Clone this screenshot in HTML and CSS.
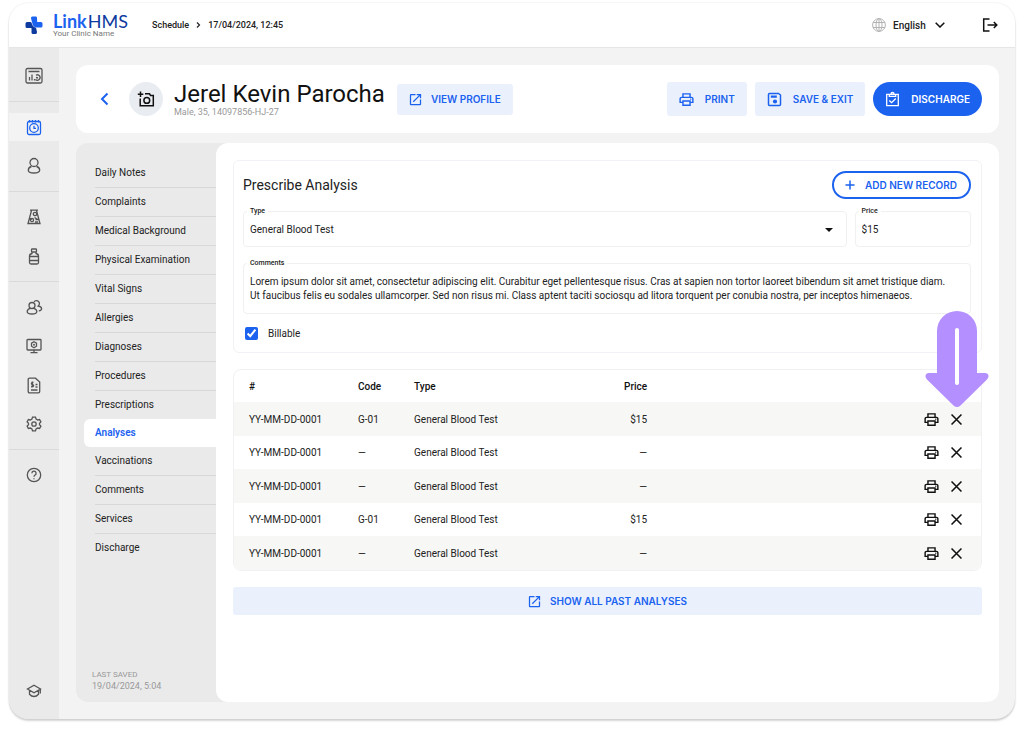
FILE: index.html
```html
<!DOCTYPE html>
<html lang="en">

<head>
    <meta charset="UTF-8">
    <meta name="viewport" content="width=device-width, initial-scale=1.0">
    <title>Link HMS - Analyses</title>
    <link rel="stylesheet" href="styles.css">
</head>

<body>
    <!-- shared icons -->
    <svg class="sprite" width="0" height="0" aria-hidden="true">
        <symbol id="i-print" viewBox="0 0 24 24">
            <path fill="currentColor" d="M19 8h-1V3H6v5H5c-1.66 0-3 1.34-3 3v6h4v4h12v-4h4v-6c0-1.66-1.34-3-3-3zM8 5h8v3H8V5zm8 14H8v-4h8v4zm2-4v-2H6v2H4v-4c0-.55.45-1 1-1h14c.55 0 1 .45 1 1v4h-2z" />
            <circle cx="18" cy="11.5" r="1" fill="currentColor" />
        </symbol>
        <symbol id="i-close" viewBox="0 0 24 24">
            <path fill="none" stroke="currentColor" stroke-width="2.2" d="M5 5l14 14M19 5L5 19" />
        </symbol>
        <symbol id="i-open" viewBox="0 0 24 24">
            <path fill="currentColor" d="M19 19H5V5h7V3H5c-1.1 0-2 .9-2 2v14c0 1.1.9 2 2 2h14c1.1 0 2-.9 2-2v-7h-2v7zM14 3v2h3.59l-9.83 9.83 1.41 1.41L19 6.41V10h2V3h-7z" />
        </symbol>
    </svg>

    <div class="app">
        <header class="topbar">
            <a href="#" class="logo">
                <svg width="18" height="18" viewBox="0 0 18 18" aria-hidden="true">
                    <path fill="#1b62ef" d="M7.500.5h3.200Q12 .5 12 1.800L12.200 6H16q1.500 0 1.500 1.500V10q0 1.500-1.500 1.500h-4.500Q8.500 11.300 7.500 8L6 2.300Q5.700.5 7.500.5z" />
                    <path fill="#0d3a9e" d="M2 6h3.500Q6.500 6 7 8q1 3.300 4 3.800l1 4.200q.3 2-1.500 2H8q-1.500 0-1.500-1.500V12H2Q.5 12 .5 10.500v-3Q.5 6 2 6z" />
                </svg>
                <span class="logo-text">
                    <span class="logo-name"><b>Link</b>HMS</span>
                    <span class="logo-sub">Your Clinic Name</span>
                </span>
            </a>
            <nav class="crumbs" aria-label="Breadcrumb">
                <a href="#">Schedule</a>
                <svg width="5" height="8" viewBox="0 0 5 8" aria-hidden="true"><path fill="none" stroke="#222" stroke-width="1.200" d="M1 1.500L3.500 4 1 6.500" /></svg>
                <span>17/04/2024, 12:45</span>
            </nav>
            <div class="language">
                <svg width="14" height="14" viewBox="0 0 14 14" aria-hidden="true">
                    <g fill="none" stroke="#b4b4b4" stroke-width="1">
                        <circle cx="7" cy="7" r="6.400" />
                        <ellipse cx="7" cy="7" rx="3" ry="6.400" />
                        <path d="M7 .6v12.800M1 4.500h12M1 9.500h12" />
                    </g>
                </svg>
                <div class="language-select">
                    <select aria-label="Language">
                        <option>English</option>
                    </select>
                    <svg width="10" height="6" viewBox="0 0 10 6" aria-hidden="true"><path fill="none" stroke="#111" stroke-width="1.500" d="M.7.7L5 5 9.300.7" /></svg>
                </div>
            </div>
            <button type="button" class="icon-btn" aria-label="Log out">
                <svg width="16" height="14" viewBox="0 0 16 14" aria-hidden="true"><path fill="none" stroke="#111" stroke-width="1.500" d="M7.500 1H1.700v12h5.800M5.500 7h9M11.800 4l3 3-3 3" /></svg>
            </button>
        </header>

        <div class="body">
            <nav class="rail" aria-label="Main">
                <div class="rail-group">
                    <a href="#" aria-label="Dashboard">
                        <svg width="18" height="18" viewBox="0 0 18 18"><rect x="1" y="1.500" width="16" height="14.500" rx="1.500" /><path d="M3.500 4.500h11M4.500 10v3.500M7 7.500v6M9.500 12v1.500M11 8.200a2.700 2.700 0 1 1-.5 4.300M11 10.500l2 .5" /></svg>
                    </a>
                </div>
                <div class="rail-group">
                    <a href="#" class="active" aria-label="Schedule">
                        <svg width="16" height="17" viewBox="0 0 16 17"><rect x="1.500" y="2.500" width="13" height="13" rx="1.500" /><circle cx="8" cy="9" r="4.300" /><path d="M8 6.800V9.300h2M3.500 1v2.500M6.500 1v2.500M9.500 1v2.500M12.500 1v2.500" /></svg>
                    </a>
                    <a href="#" aria-label="Patients">
                        <svg width="16" height="18" viewBox="0 0 16 18"><circle cx="8" cy="5.500" r="4" /><path d="M5.500 9.500C3.500 10 2.300 11.500 2.300 13.300 2.300 15 5 16 8 16s5.700-1 5.700-2.700c0-1.800-1.200-3.300-3.200-3.800" /></svg>
                    </a>
                </div>
                <div class="rail-group">
                    <a href="#" aria-label="Laboratory">
                        <svg width="16" height="16" viewBox="0 0 16 16"><path d="M4 1.200h8M5.500 1.500L2 14.500h12l-3.500-13M3.300 10h3M9.500 10.500h3.300" /><circle cx="9" cy="5" r="1.700" /><circle cx="6" cy="11" r="1.600" /><path d="M8.500 8.500l3 2M9 13h3" /></svg>
                    </a>
                    <a href="#" aria-label="Pharmacy">
                        <svg width="14" height="17" viewBox="0 0 14 17"><rect x="4.500" y="1" width="5" height="3" rx=".8" /><path d="M5 4v1.500Q2.500 6 2.500 8v6.500Q2.500 16 4 16h6q1.500 0 1.500-1.500V8q0-2-2.500-2.500V4M2.500 8.500h9M2.500 12.500h9" /></svg>
                    </a>
                </div>
                <div class="rail-group">
                    <a href="#" aria-label="Staff">
                        <svg width="17" height="16" viewBox="0 0 17 16"><circle cx="6" cy="6.500" r="3" /><path d="M4.300 9.300C2.500 9.800 1.200 11 1.200 12.500c0 1.600 2 2.500 4.800 2.500s4.800-.9 4.800-2.500c0-1.500-1.300-2.700-3.100-3.200M8 2.800a3 3 0 1 1 4.200 4.200c2 .4 3.400 1.400 3.400 2.700 0 1.200-1 1.900-2.800 2.100" /></svg>
                    </a>
                    <a href="#" aria-label="Workstation">
                        <svg width="16" height="16" viewBox="0 0 16 16"><rect x="1" y="1.500" width="14" height="10.500" rx=".8" /><path d="M8 12v2.500M4.500 14.700h7M8 3.700l2.500 1.500v3L8 9.700 5.500 8.200v-3z" /><circle cx="8" cy="6.700" r=".4" /></svg>
                    </a>
                    <a href="#" aria-label="Billing">
                        <svg width="14" height="17" viewBox="0 0 14 17"><path d="M2.500 1.200h6L12.700 5v9.500q0 1.300-1.300 1.300H2.500q-1.300 0-1.300-1.300v-12q0-1.300 1.300-1.300zM4 13h6.500M8.500 7.500h2M8.500 10h2M6.500 5.500c-2.500-.5-2.500 2-1 2.200 1.800.3 1.500 2.500-1.500 2M5.300 4.500v6" /></svg>
                    </a>
                    <a href="#" aria-label="Settings">
                        <svg width="16" height="16" viewBox="0 0 16 16"><path d="M6.500 1.200h3l.6 1.900 1.500.9 2-.5 1.300 2.400L13.500 7.300v1.400l1.400 1.400-1.300 2.400-2-.5-1.500.9-.6 1.900h-3l-.6-1.900-1.500-.9-2 .5-1.300-2.400 1.400-1.400V7.300L1.100 5.900l1.300-2.400 2 .5 1.500-.9z" /><circle cx="8" cy="8" r="2.200" /></svg>
                    </a>
                </div>
                <div class="rail-group">
                    <a href="#" aria-label="Help">
                        <svg width="16" height="16" viewBox="0 0 16 16"><circle cx="8" cy="8" r="6.700" /><path d="M5.900 6.300A2.100 2.100 0 1 1 8.900 8.200Q8 8.700 8 9.700M8 11.200v1.100" /></svg>
                    </a>
                </div>
                <div class="rail-group rail-bottom">
                    <a href="#" aria-label="Academy">
                        <svg width="16" height="14" viewBox="0 0 16 14"><path d="M8 1.200l6.500 3.800L8 8.800 1.500 5zM3.500 6.500v3.700Q5.500 12.500 8 12.500t4.500-2.300V6.500M14.300 5v4.500" /></svg>
                    </a>
                </div>
            </nav>

            <main class="main">
                <section class="patient">
                    <a href="#" class="back" aria-label="Back">
                        <svg width="9" height="14" viewBox="0 0 9 14"><path fill="none" stroke="#1b62ef" stroke-width="2" d="M7.500 1.500L2 7l5.500 5.500" /></svg>
                    </a>
                    <button type="button" class="avatar" aria-label="Add photo">
                        <svg width="18" height="16" viewBox="0 0 18 16"><path fill="none" stroke="#111" stroke-width="1.500" d="M8 2.800h4.500l1 1.600h2.800v10.300H3.200V7.500M3.500.5v5.500M.8 3.200h5.500" /><circle cx="9.800" cy="9.400" r="2.900" fill="none" stroke="#111" stroke-width="1.500" /></svg>
                    </button>
                    <div class="patient-info">
                        <h1>Jerel Kevin Parocha</h1>
                        <p>Male, 35, 14097856-HJ-27</p>
                    </div>
                    <a href="#" class="btn btn-small">
                        <svg width="15" height="15"><use href="#i-open" /></svg>
                        VIEW PROFILE
                    </a>
                    <div class="actions">
                        <button type="button" class="btn">
                            <svg width="17" height="17"><use href="#i-print" /></svg>
                            PRINT
                        </button>
                        <button type="button" class="btn">
                            <svg width="17" height="17" viewBox="0 0 17 17"><path fill="none" stroke="currentColor" stroke-width="1.500" d="M3.500 2.500h9L14.500 4v9.500q0 1-1 1h-10q-1 0-1-1v-10q0-1 1-1z" /><path fill="currentColor" d="M4.800 4.500h6v2.300h-6z" /><circle cx="9" cy="10.500" r="2.100" fill="currentColor" /></svg>
                            SAVE &amp; EXIT
                        </button>
                        <button type="button" class="btn btn-primary">
                            <svg width="17" height="17" viewBox="0 0 17 17"><path fill="none" stroke="currentColor" stroke-width="1.300" d="M2.700 3.300h11.600v11.400H2.700zM5.300 3.300v2h6.400v-2M7 3a1.500 1.500 0 0 1 3 0M5.300 9.500l2.300 2.200 4.200-4.200" /></svg>
                            DISCHARGE
                        </button>
                    </div>
                </section>

                <div class="record">
                    <aside class="tabs">
                        <nav aria-label="Patient record">
                            <a href="#">Daily Notes</a>
                            <a href="#">Complaints</a>
                            <a href="#">Medical Background</a>
                            <a href="#">Physical Examination</a>
                            <a href="#">Vital Signs</a>
                            <a href="#">Allergies</a>
                            <a href="#">Diagnoses</a>
                            <a href="#">Procedures</a>
                            <a href="#" class="no-line">Prescriptions</a>
                            <a href="#" class="active">Analyses</a>
                            <a href="#">Vaccinations</a>
                            <a href="#">Comments</a>
                            <a href="#">Services</a>
                            <a href="#" class="no-line">Discharge</a>
                        </nav>
                        <p class="saved"><span>LAST SAVED</span>19/04/2024, 5:04</p>
                    </aside>

                    <div class="panel">
                        <form class="card">
                            <div class="card-head">
                                <h2>Prescribe Analysis</h2>
                                <button type="button" class="btn btn-outline">
                                    <svg width="10" height="10" viewBox="0 0 10 10"><path stroke="currentColor" stroke-width="1.500" d="M5 .5v9M.5 5h9" /></svg>
                                    ADD NEW RECORD
                                </button>
                            </div>
                            <div class="row">
                                <div class="field field-type">
                                    <label for="type">Type</label>
                                    <select id="type">
                                        <option>General Blood Test</option>
                                    </select>
                                    <svg class="caret" width="8" height="4" viewBox="0 0 8 4"><path fill="#111" d="M0 0h8L4 4z" /></svg>
                                </div>
                                <div class="field field-price">
                                    <label for="price">Price</label>
                                    <input type="text" id="price" value="$15">
                                </div>
                            </div>
                            <div class="field">
                                <label for="comments">Comments</label>
                                <textarea id="comments" rows="2">Lorem ipsum dolor sit amet, consectetur adipiscing elit. Curabitur eget pellentesque risus. Cras at sapien non tortor laoreet bibendum sit amet tristique diam. Ut faucibus felis eu sodales ullamcorper. Sed non risus mi. Class aptent taciti sociosqu ad litora torquent per conubia nostra, per inceptos himenaeos.</textarea>
                            </div>
                            <label class="check"><input type="checkbox" checked>Billable</label>
                        </form>

                        <div class="table-wrap">
                            <table>
                                <colgroup>
                                    <col class="col-id">
                                    <col class="col-code">
                                    <col class="col-type">
                                    <col class="col-price">
                                    <col>
                                </colgroup>
                                <thead>
                                    <tr>
                                        <th>#</th>
                                        <th>Code</th>
                                        <th>Type</th>
                                        <th class="price">Price</th>
                                        <th></th>
                                    </tr>
                                </thead>
                                <tbody>
                                    <tr>
                                        <td>YY-MM-DD-0001</td>
                                        <td>G-01</td>
                                        <td>General Blood Test</td>
                                        <td class="price">$15</td>
                                        <td>
                                            <div class="tools">
                                                <button type="button" aria-label="Print"><svg width="17" height="17"><use href="#i-print" /></svg></button>
                                                <button type="button" aria-label="Remove"><svg width="17" height="17"><use href="#i-close" /></svg></button>
                                            </div>
                                        </td>
                                    </tr>
                                    <tr>
                                        <td>YY-MM-DD-0001</td>
                                        <td>—</td>
                                        <td>General Blood Test</td>
                                        <td class="price">—</td>
                                        <td>
                                            <div class="tools">
                                                <button type="button" aria-label="Print"><svg width="17" height="17"><use href="#i-print" /></svg></button>
                                                <button type="button" aria-label="Remove"><svg width="17" height="17"><use href="#i-close" /></svg></button>
                                            </div>
                                        </td>
                                    </tr>
                                    <tr>
                                        <td>YY-MM-DD-0001</td>
                                        <td>—</td>
                                        <td>General Blood Test</td>
                                        <td class="price">—</td>
                                        <td>
                                            <div class="tools">
                                                <button type="button" aria-label="Print"><svg width="17" height="17"><use href="#i-print" /></svg></button>
                                                <button type="button" aria-label="Remove"><svg width="17" height="17"><use href="#i-close" /></svg></button>
                                            </div>
                                        </td>
                                    </tr>
                                    <tr>
                                        <td>YY-MM-DD-0001</td>
                                        <td>G-01</td>
                                        <td>General Blood Test</td>
                                        <td class="price">$15</td>
                                        <td>
                                            <div class="tools">
                                                <button type="button" aria-label="Print"><svg width="17" height="17"><use href="#i-print" /></svg></button>
                                                <button type="button" aria-label="Remove"><svg width="17" height="17"><use href="#i-close" /></svg></button>
                                            </div>
                                        </td>
                                    </tr>
                                    <tr>
                                        <td>YY-MM-DD-0001</td>
                                        <td>—</td>
                                        <td>General Blood Test</td>
                                        <td class="price">—</td>
                                        <td>
                                            <div class="tools">
                                                <button type="button" aria-label="Print"><svg width="17" height="17"><use href="#i-print" /></svg></button>
                                                <button type="button" aria-label="Remove"><svg width="17" height="17"><use href="#i-close" /></svg></button>
                                            </div>
                                        </td>
                                    </tr>
                                </tbody>
                            </table>
                            <!-- arrow pointing at the first remove button -->
                            <svg class="pointer" width="64" height="96" viewBox="0 0 64 96" aria-hidden="true">
                                <path fill="#b48fff" d="M12 20a20 20 0 0 1 40 0v42h8q3 0 3.500 2.800.3 2-1.500 3.700L35.500 94.500q-3.500 3-7 0L2 68.500Q.2 66.800.5 64.800 1 62 4 62h8z" />
                                <rect x="30" y="17" width="4" height="57" rx="2" fill="#fff" />
                            </svg>
                        </div>

                        <a href="#" class="btn btn-wide">
                            <svg width="15" height="15"><use href="#i-open" /></svg>
                            SHOW ALL PAST ANALYSES
                        </a>
                    </div>
                </div>
            </main>
        </div>
    </div>
</body>

</html>
```
FILE: styles.css
```css
* {
    box-sizing: border-box;
}

body {
    font-family: Roboto, sans-serif;
    font-size: 10px;
    color: #222;
    background-color: #fff;
    margin: 0;
    padding: 3px 9px 14px;
    min-height: 100vh;
    display: flex;
}

a {
    color: inherit;
    text-decoration: none;
}

h1,
h2,
p {
    margin: 0;
    font-weight: 400;
}

button,
select,
input,
textarea {
    font: inherit;
    color: inherit;
}

button {
    border: 0;
    background: none;
    padding: 0;
    cursor: pointer;
}

svg {
    display: block;
    flex-shrink: 0;
}

.sprite {
    position: absolute;
}

.app {
    flex: 1;
    min-width: 0;
    display: flex;
    flex-direction: column;
    background-color: #f3f3f3;
    border-radius: 20px;
    overflow: hidden;
    box-shadow: 0 2px 2px rgba(0, 0, 0, 0.16), 0 0 2px rgba(0, 0, 0, 0.12);
}

/* top bar */
.topbar {
    display: flex;
    align-items: center;
    height: 45px;
    padding: 0 17px 0 16px;
    background-color: #fff;
    border-bottom: 1px solid #e6e6e6;
}

.logo {
    display: flex;
    align-items: center;
    gap: 10px;
    width: 127px;
}

.logo-text {
    display: flex;
    flex-direction: column;
}

.logo-name {
    font-family: Lato, sans-serif;
    font-size: 18px;
    line-height: 18px;
    color: #0d3a9e;
    white-space: nowrap;
}

.logo-name b {
    margin-right: 1px;
    color: #1b62ef;
    font-weight: 700;
}

.logo-sub {
    font-size: 8px;
    line-height: 8px;
    color: #777;
}

.crumbs {
    display: flex;
    align-items: center;
    gap: 7px;
    font-size: 9px;
    font-weight: 500;
}

.language {
    display: flex;
    align-items: center;
    gap: 7px;
    margin-left: auto;
    margin-right: 37px;
    font-weight: 500;
}

.language-select {
    position: relative;
    display: flex;
    align-items: center;
}

.language-select select {
    appearance: none;
    border: 0;
    background: none;
    padding: 0 19px 0 0;
}

.language-select svg {
    position: absolute;
    right: 0;
    pointer-events: none;
}

/* icon rail */
.body {
    flex: 1;
    display: flex;
}

.rail {
    display: flex;
    flex-direction: column;
    width: 50px;
    padding: 3px 0;
    background-color: #eaeaea;
}

.rail-group {
    display: flex;
    flex-direction: column;
    gap: 11px;
    padding: 11px 0;
}

.rail-group + .rail-group {
    border-top: 1px solid #dadada;
}

.rail-group.rail-bottom {
    margin-top: auto;
    border-top: 0;
}

.rail a {
    display: flex;
    align-items: center;
    justify-content: center;
    height: 28px;
    color: #555;
}

.rail a.active {
    color: #1b62ef;
    background-color: #f3f3f3;
}

.rail svg {
    fill: none;
    stroke: currentColor;
    stroke-width: 1.3;
}

/* main area */
.main {
    flex: 1;
    min-width: 0;
    display: flex;
    flex-direction: column;
    gap: 10px;
    padding: 17px 16px 17px 17px;
}

.patient {
    display: flex;
    align-items: center;
    padding: 16px 17px 16px 24px;
    background-color: #fff;
    border-radius: 12px;
}

.avatar {
    display: flex;
    align-items: center;
    justify-content: center;
    width: 34px;
    height: 34px;
    margin: 0 11px 0 20px;
    background-color: #e9edf1;
    border-radius: 50%;
}

.patient-info {
    margin-right: 12px;
}

.patient-info h1 {
    font-size: 24px;
    line-height: 26px;
    color: #111;
}

.patient-info p {
    font-size: 9px;
    line-height: 10px;
    color: #999;
}

.actions {
    display: flex;
    gap: 8px;
    margin-left: auto;
}

.btn {
    display: flex;
    align-items: center;
    justify-content: center;
    gap: 10px;
    height: 34px;
    padding: 0 12px 0 11px;
    font-family: Inter, sans-serif;
    font-size: 10px;
    font-weight: 600;
    color: #1b62ef;
    white-space: nowrap;
    background-color: #eaf1fd;
    border-radius: 3px;
}

.btn-small {
    height: 31px;
    gap: 8px;
}

.btn-primary {
    color: #fff;
    background-color: #1b62ef;
    border-radius: 17px;
}

.btn-outline {
    height: 28px;
    background: none;
    border: 2px solid #1b62ef;
    border-radius: 14px;
}

.btn-wide {
    height: 28px;
    gap: 8px;
}

.record {
    flex: 1;
    display: flex;
    background-color: #eaeaea;
    border-radius: 12px;
}

.tabs {
    display: flex;
    flex-direction: column;
    justify-content: space-between;
    width: 140px;
    padding: 16px 0 10px 8px;
}

.tabs a {
    display: block;
    line-height: 28px;
    margin-left: 11px;
    border-bottom: 1px solid #d8d8d8;
}

.tabs a.no-line {
    border-bottom: 0;
}

.tabs a.active {
    margin-left: 0;
    padding-left: 11px;
    font-weight: 600;
    color: #1b62ef;
    background-color: #fff;
    border-bottom: 0;
    border-radius: 6px 0 0 6px;
}

.saved {
    padding-left: 8px;
    font-size: 9px;
    line-height: 12px;
    color: #999;
}

.saved span {
    display: block;
    font-size: 8px;
    line-height: 11px;
}

.panel {
    flex: 1;
    min-width: 0;
    display: flex;
    flex-direction: column;
    gap: 16px;
    padding: 17px;
    background-color: #fff;
    border-radius: 12px;
}

/* analysis form */
.card {
    padding: 10px 10px 12px 9px;
    border: 1px solid #f1f1f6;
    border-radius: 6px;
}

.card-head {
    display: flex;
    align-items: center;
    justify-content: space-between;
    margin-bottom: 12px;
}

.card-head h2 {
    font-size: 14px;
}

.row {
    display: flex;
    gap: 8px;
    margin-bottom: 16px;
}

.field {
    position: relative;
    display: flex;
    border: 1px solid #f0f0f3;
    border-radius: 4px;
}

.field-type {
    flex: 1;
}

.field-price {
    width: 16%;
}

.field label {
    position: absolute;
    top: -5px;
    left: 3px;
    padding: 0 3px;
    font-size: 7px;
    line-height: 9px;
    font-weight: 500;
    background-color: #fff;
}

.field select,
.field input,
.field textarea {
    appearance: none;
    flex: 1;
    min-width: 0;
    height: 34px;
    padding: 0 6px;
    border: 0;
    background: none;
}

.field textarea {
    height: 49px;
    padding: 11px 16px 10px 6px;
    line-height: 14px;
    resize: none;
}

.caret {
    position: absolute;
    right: 13px;
    top: 16px;
    pointer-events: none;
}

.check {
    display: flex;
    align-items: center;
    gap: 10px;
    margin: 13px 0 0 2px;
}

.check input {
    width: 13px;
    height: 13px;
    margin: 0;
    accent-color: #1b62ef;
}

/* analyses table */
.table-wrap {
    position: relative;
    border: 1px solid #f1f1f4;
    border-radius: 8px;
}

table {
    width: 100%;
    table-layout: fixed;
    border-collapse: collapse;
}

.col-id {
    width: 16.6%;
}

.col-code {
    width: 7.5%;
}

.col-type {
    width: 20%;
}

.col-price {
    width: 11.2%;
}

th,
td {
    padding: 0;
    text-align: left;
    font-weight: 400;
}

th {
    height: 32px;
    font-weight: 500;
    color: #111;
}

td {
    height: 33px;
}

th:first-child,
td:first-child {
    padding-left: 15px;
}

.price {
    text-align: right;
}

tbody tr:nth-child(odd) td {
    height: 34px;
    background-color: #f7f7f5;
}

tbody tr:last-child td:first-child {
    border-bottom-left-radius: 8px;
}

tbody tr:last-child td:last-child {
    border-bottom-right-radius: 8px;
}

.tools {
    display: flex;
    justify-content: flex-end;
    gap: 8px;
    padding-right: 16px;
    color: #111;
}

.pointer {
    position: absolute;
    top: -59px;
    right: -8px;
    pointer-events: none;
}
```
